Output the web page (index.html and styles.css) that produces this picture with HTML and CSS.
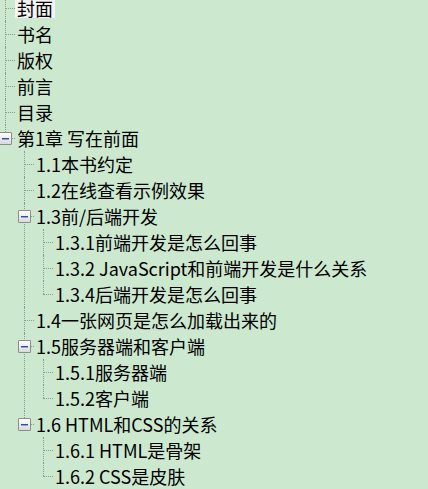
FILE: index.html
```html
<!DOCTYPE html>
<html lang="zh">
<head>
<meta charset="utf-8">
<title>目录</title>
<link rel="stylesheet" href="styles.css">
</head>
<body>
<ul class="tree">
  <li><div class="row"><span class="label selected">封面</span></div></li>
  <li><div class="row"><span class="label">书名</span></div></li>
  <li><div class="row"><span class="label">版权</span></div></li>
  <li><div class="row"><span class="label">前言</span></div></li>
  <li><div class="row"><span class="label">目录</span></div></li>
  <li class="last"><div class="row"><span class="toggle"></span><span class="label">第1章 写在前面</span></div>
    <ul>
      <li><div class="row"><span class="label">1.1本书约定</span></div></li>
      <li><div class="row"><span class="label">1.2在线查看示例效果</span></div></li>
      <li><div class="row"><span class="toggle"></span><span class="label">1.3前/后端开发</span></div>
        <ul>
          <li><div class="row"><span class="label">1.3.1前端开发是怎么回事</span></div></li>
          <li><div class="row"><span class="label">1.3.2 JavaScript和前端开发是什么关系</span></div></li>
          <li class="last"><div class="row"><span class="label">1.3.4后端开发是怎么回事</span></div></li>
        </ul>
      </li>
      <li><div class="row"><span class="label">1.4一张网页是怎么加载出来的</span></div></li>
      <li><div class="row"><span class="toggle"></span><span class="label">1.5服务器端和客户端</span></div>
        <ul>
          <li><div class="row"><span class="label">1.5.1服务器端</span></div></li>
          <li class="last"><div class="row"><span class="label">1.5.2客户端</span></div></li>
        </ul>
      </li>
      <li class="last"><div class="row"><span class="toggle"></span><span class="label">1.6 HTML和CSS的关系</span></div>
        <ul>
          <li><div class="row"><span class="label">1.6.1 HTML是骨架</span></div></li>
          <li class="last"><div class="row"><span class="label">1.6.2 CSS是皮肤</span></div></li>
        </ul>
      </li>
    </ul>
  </li>
</ul>
</body>
</html>
```
FILE: styles.css
```css
html, body {
  margin: 0;
  padding: 0;
  background: #cce8cf;
  overflow: hidden;
}
body {
  font-family: "Noto Sans CJK SC", "Noto Sans", sans-serif;
  font-size: 18px;
  color: #000;
}
.tree, .tree ul {
  list-style: none;
  margin: 0;
  padding: 0;
}
.tree {
  margin: -5px 0 0 5px;
}
.tree ul {
  margin-left: 19px;
}
.tree li {
  position: relative;
}
.tree li::before {
  content: "";
  position: absolute;
  left: 0;
  top: 0;
  bottom: 0;
  border-left: 1px dotted #8a9a8c;
}
.tree li.last::before {
  bottom: auto;
  height: 13px;
}
.row {
  position: relative;
  height: 26px;
  display: flex;
  align-items: center;
  padding-left: 10px;
  white-space: nowrap;
}
.row::before {
  content: "";
  position: absolute;
  left: 0;
  top: 13px;
  width: 10px;
  border-top: 1px dotted #8a9a8c;
}
.label {
  display: inline-block;
  line-height: 20px;
  padding: 0 2px;
}
.label.selected {
  background: #f3f3f3;
}
.toggle {
  position: absolute;
  left: -6px;
  top: 7px;
  width: 11px;
  height: 11px;
  border: 1px solid #8c8c8c;
  border-radius: 1px;
  background: linear-gradient(#ffffff, #d9d9d9);
  z-index: 1;
}
.toggle::after {
  content: "";
  position: absolute;
  left: 2px;
  top: 5px;
  width: 7px;
  height: 1px;
  background: #2f4fa0;
  box-shadow: 0 1px 0 #8ea2d4;
}
```
